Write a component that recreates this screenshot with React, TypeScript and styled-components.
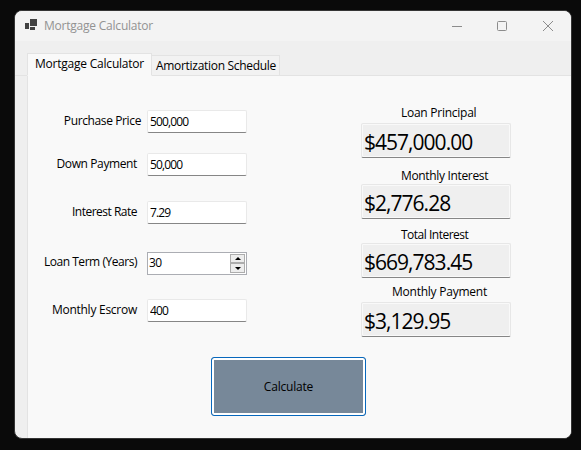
import React from "react";
import styled, { createGlobalStyle } from "styled-components";

const GlobalStyle = createGlobalStyle`
  * { box-sizing: border-box; }
  body { margin: 0; background: #0a0a0a; }
  input, button { font: inherit; color: inherit; letter-spacing: inherit; }
`;

const Desktop = styled.div`
  width: 581px;
  height: 450px;
  padding: 10px 9px 11px 14px;
  background: #0a0a0a;
  overflow: hidden;
  font-family: "Open Sans", "Noto Sans", sans-serif;
  font-size: 12px;
  color: #000;
`;

const Window = styled.main`
  height: 429px;
  display: flex;
  flex-direction: column;
  border: 1px solid #353535;
  border-radius: 8px;
  background: #efefef;
  overflow: hidden;
`;

const TitleBar = styled.header`
  height: 30px;
  flex: none;
  display: flex;
  align-items: center;
  padding-left: 10px;
  background: #f3f3f3;
`;

const AppIcon = styled.svg`
  width: 12px;
  height: 11px;
  margin-top: -3px;
`;

const Text = styled.span<{ $spacing: number }>`
  display: block;
  line-height: 16px;
  white-space: nowrap;
  letter-spacing: ${(p) => p.$spacing}px;
`;

const Title = styled(Text)`
  margin-left: 7px;
  color: #929292;
  flex: 1;
`;

const WindowButtons = styled.svg`
  width: 102px;
  height: 12px;
  margin: -1px 17px 0 0;
  fill: none;
  stroke: #8c8c8c;
`;

const Tabs = styled.nav`
  height: 35px;
  flex: none;
  display: flex;
  align-items: flex-end;
  padding-left: 12px;
  box-shadow: inset 0 -1px #e3e3e3;
`;

const Tab = styled.div<{ $active?: boolean }>`
  width: ${(p) => (p.$active ? 125 : 128)}px;
  height: ${(p) => (p.$active ? 23 : 21)}px;
  padding: ${(p) => (p.$active ? "2px 0 0 7px" : "2px 0 0 4px")};
  border: 1px solid #e3e3e3;
  border-bottom-color: ${(p) => (p.$active ? "#f9f9f9" : "#e3e3e3")};
  border-left-width: ${(p) => (p.$active ? 1 : 0)}px;
  background: ${(p) => (p.$active ? "#f9f9f9" : "#f2f2f2")};
`;

const Page = styled.section`
  flex: 1;
  margin-left: 12px;
  border-left: 1px solid #e3e3e3;
  background: #f9f9f9;
`;

const Columns = styled.div`
  display: flex;
  height: 281px;
`;

const Inputs = styled.div`
  width: 219px;
  padding-top: 34px;
`;

const Field = styled.label<{ $gap: number }>`
  height: 23px;
  margin-bottom: ${(p) => p.$gap}px;
  display: flex;
  justify-content: space-between;
`;

const FieldLabel = styled(Text)<{ $inset: number; $top: number }>`
  width: ${(p) => 109 + p.$inset}px;
  padding-top: ${(p) => p.$top}px;
  text-align: right;
`;

const InputBox = styled.input`
  width: 100px;
  height: 23px;
  padding: 0 0 1px 2px;
  border: 1px solid #e9e9e9;
  border-bottom-color: #868686;
  border-radius: 2px;
  background: #fff;
  outline: none;
  letter-spacing: -0.87px;
`;

const Spinner = styled.div`
  width: 100px;
  height: 23px;
  display: flex;
  border: 1px solid #abadb3;
  background: #fff;
`;

const SpinnerValue = styled.input`
  width: 82px;
  height: 19px;
  padding: 0 0 0 1px;
  border: 0;
  outline: none;
  background: transparent;
  letter-spacing: -0.7px;
`;

const Steps = styled.div`
  width: 15px;
  height: 19px;
  margin-top: 1px;
  display: grid;
  grid-template-rows: 9px 10px;
  background: #fff;
`;

const Step = styled.button`
  padding: 0;
  display: grid;
  place-items: center;
  border: 1px solid #adadad;
  background: #ededed;
  svg { display: block; width: 6px; height: 3px; }
`;

const Results = styled.div`
  width: 150px;
  margin-left: 114px;
  padding-top: 29px;
`;

const Result = styled.div<{ $height: number; $top: number }>`
  height: ${(p) => p.$height}px;
  padding-top: ${(p) => p.$top}px;
  display: flex;
  flex-direction: column;
  justify-content: space-between;
`;

const ResultLabel = styled(Text)<{ $left: number }>`
  margin-left: ${(p) => p.$left}px;
`;

const ResultBox = styled.output`
  display: block;
  height: 35px;
  padding: 4px 0 0 2px;
  border: 1px solid #e7e7e7;
  border-bottom-color: #868686;
  border-radius: 2px;
  background: #efefef;
  box-shadow: inset 0 0 0 1px #f9f9f9;
  font-size: 21px;
  line-height: 28px;
  letter-spacing: -0.98px;
`;

const CalculateButton = styled.button`
  display: block;
  width: 155px;
  height: 59px;
  margin-left: 183px;
  padding: 0;
  border: 1px solid #0868bd;
  border-radius: 3px;
  background: #778899;
  box-shadow: inset 0 0 0 2px #fff;
  letter-spacing: -0.2px;
`;

const fields = [
  { label: "Purchase Price", value: "500,000", gap: 20, inset: 4, top: 3, spacing: -0.38 },
  { label: "Down Payment", value: "50,000", gap: 25, inset: 0, top: 3, spacing: -0.38 },
  { label: "Interest Rate", value: "7.29", gap: 28, inset: 0, top: 3, spacing: -0.5 },
  { label: "Loan Term (Years)", value: "30", gap: 24, inset: 0, top: 2, spacing: -0.46, spin: true },
  { label: "Monthly Escrow", value: "400", gap: 0, inset: 0, top: 3, spacing: -0.26 },
];

const results = [
  { label: "Loan Principal", value: "$457,000.00", height: 53, top: 0, left: 40, spacing: -0.26 },
  { label: "Monthly Interest", value: "$2,776.28", height: 61, top: 10, left: 40, spacing: -0.34 },
  { label: "Total Interest", value: "$669,783.45", height: 59, top: 8, left: 40, spacing: -0.5 },
  { label: "Monthly Payment", value: "$3,129.95", height: 59, top: 6, left: 31, spacing: -0.24 },
];

export default function App() {
  return (
    <Desktop>
      <GlobalStyle />
      <Window>
        <TitleBar>
          <AppIcon viewBox="0 0 12 11" fill="#424242" shapeRendering="crispEdges">
            <path d="M5 0h7v7H5zM0 4h4v6H0zM5 8h5v3H5z" />
          </AppIcon>
          <Title $spacing={-0.22}>Mortgage Calculator</Title>
          <WindowButtons viewBox="0 0 102 12">
            <path d="M0 6.5h10" />
            <rect x="45.5" y="1.5" width="9" height="9" rx="1" />
            <path d="M91 1l10 10M101 1L91 11" />
          </WindowButtons>
        </TitleBar>
        <Tabs>
          <Tab $active><Text $spacing={-0.22}>Mortgage Calculator</Text></Tab>
          <Tab><Text $spacing={-0.3}>Amortization Schedule</Text></Tab>
        </Tabs>
        <Page>
          <Columns>
            <Inputs>
              {fields.map((f) => (
                <Field key={f.label} $gap={f.gap}>
                  <FieldLabel $spacing={f.spacing} $inset={f.inset} $top={f.top}>{f.label}</FieldLabel>
                  {f.spin ? (
                    <Spinner>
                      <SpinnerValue defaultValue={f.value} />
                      <Steps>
                        <Step aria-label="Increase"><svg viewBox="0 0 6 3"><path d="M0 3L3 0L6 3z" /></svg></Step>
                        <Step aria-label="Decrease"><svg viewBox="0 0 6 3"><path d="M0 0L3 3L6 0z" /></svg></Step>
                      </Steps>
                    </Spinner>
                  ) : (
                    <InputBox defaultValue={f.value} />
                  )}
                </Field>
              ))}
            </Inputs>
            <Results>
              {results.map((r) => (
                <Result key={r.label} $height={r.height} $top={r.top}>
                  <ResultLabel $spacing={r.spacing} $left={r.left}>{r.label}</ResultLabel>
                  <ResultBox>{r.value}</ResultBox>
                </Result>
              ))}
            </Results>
          </Columns>
          <CalculateButton>Calculate</CalculateButton>
        </Page>
      </Window>
    </Desktop>
  );
}
